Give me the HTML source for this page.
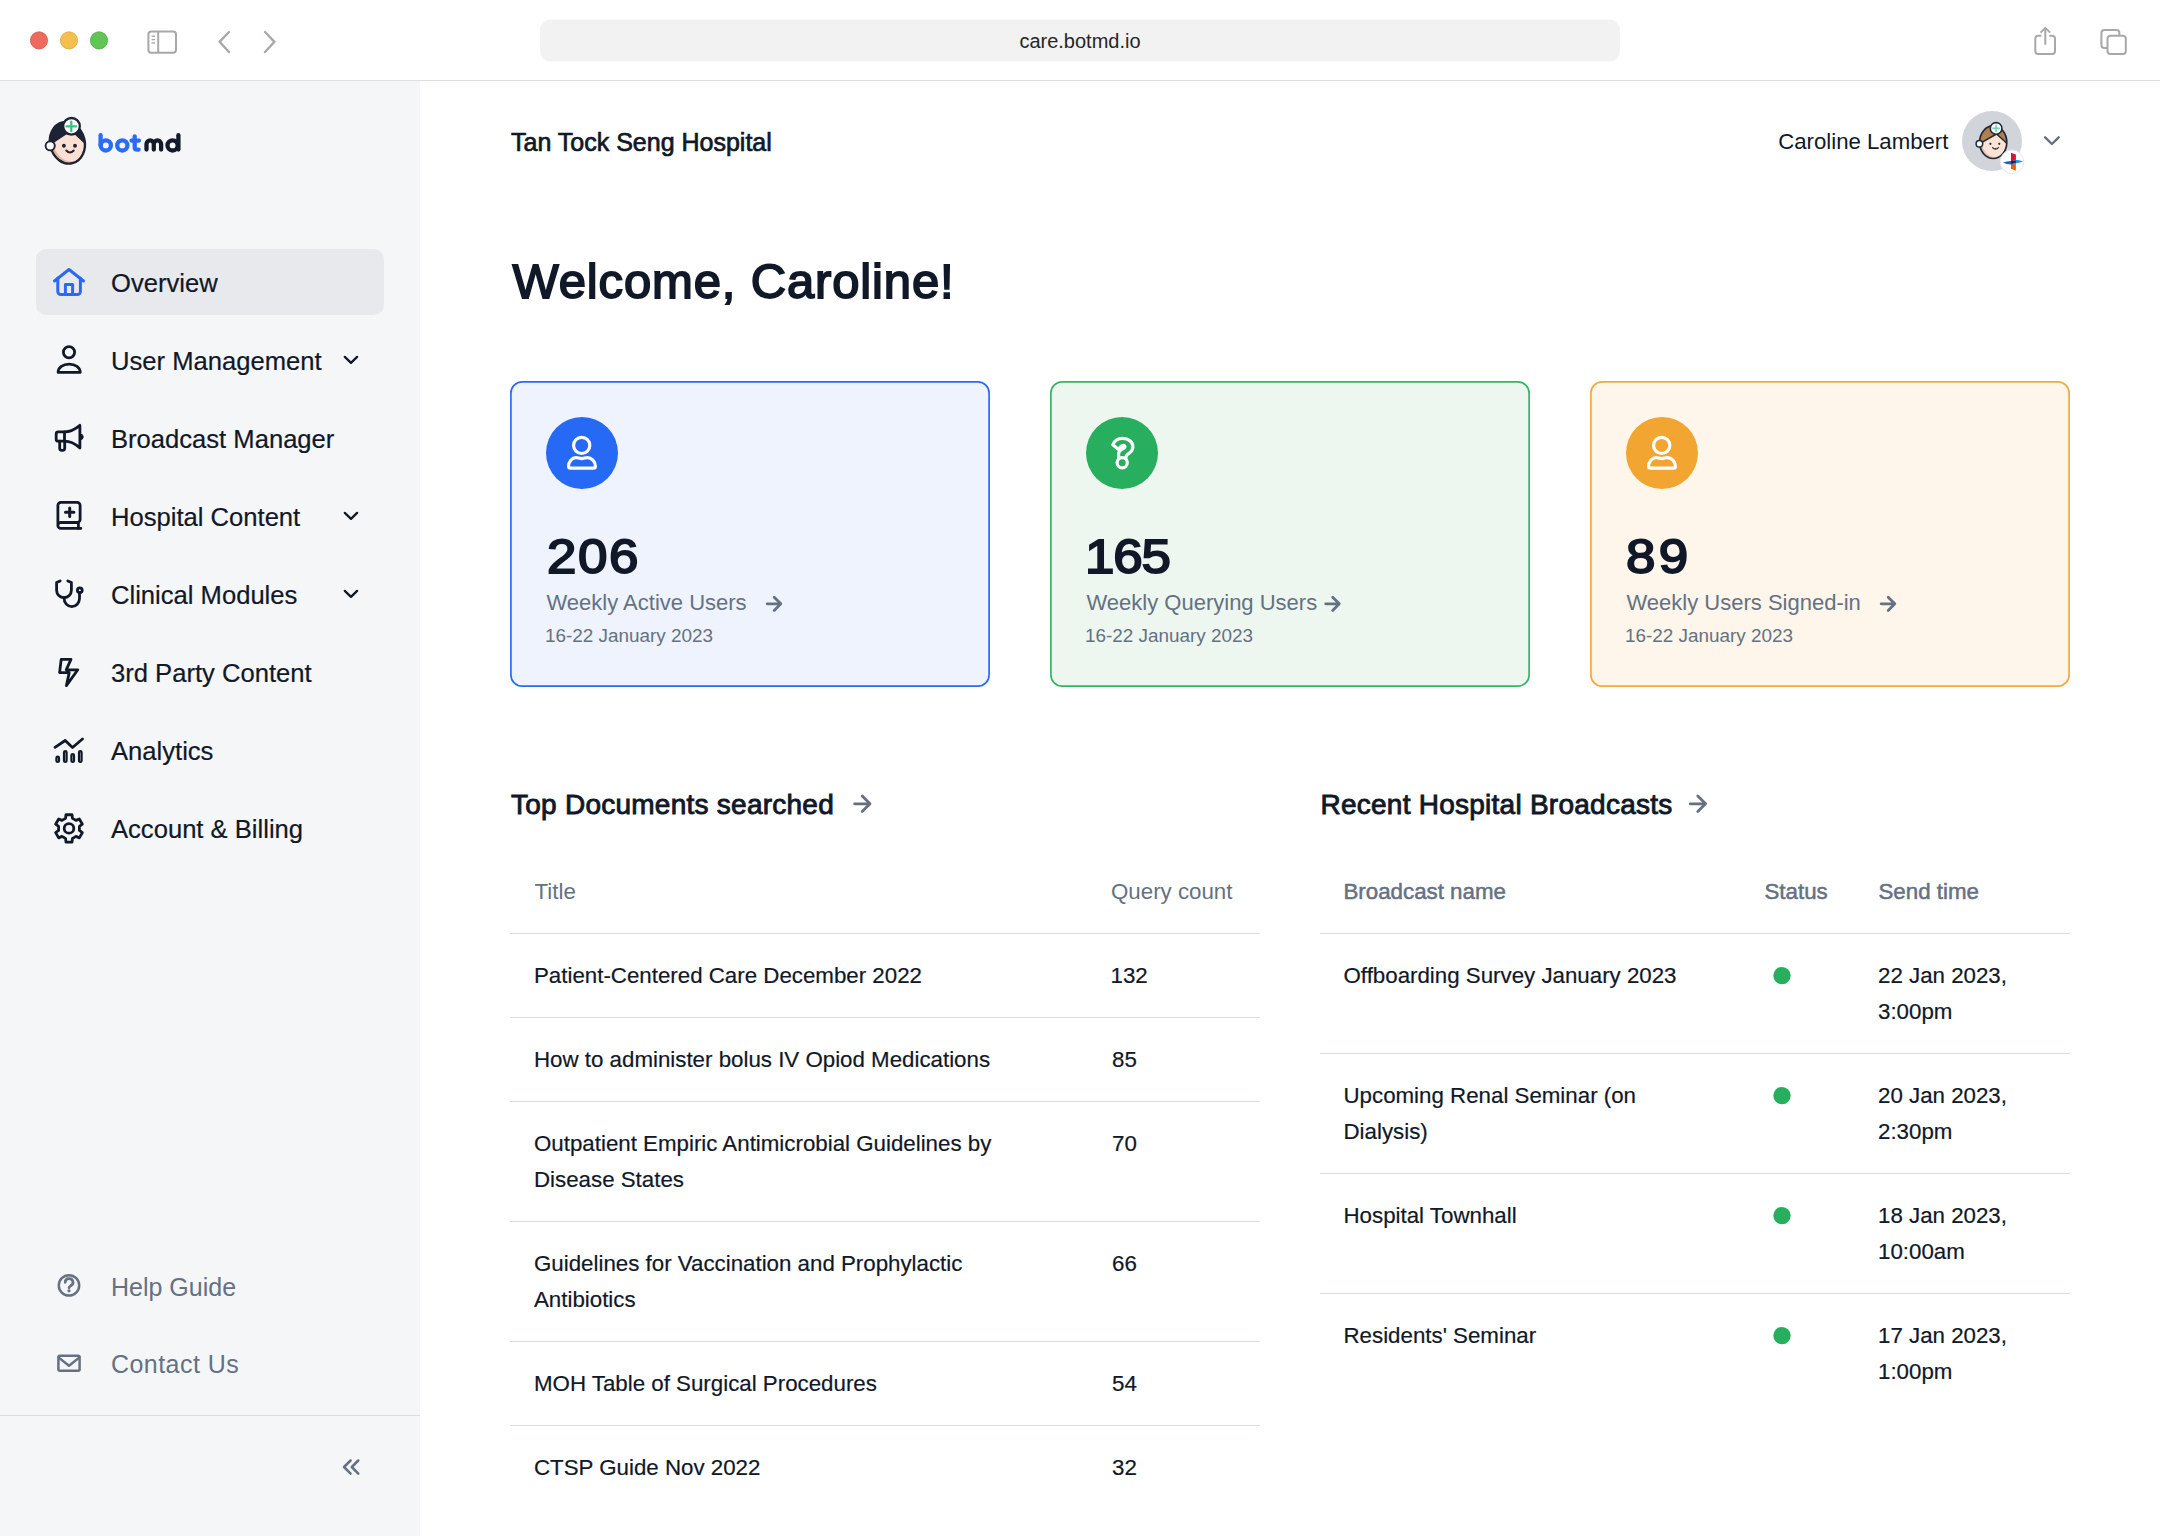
<!DOCTYPE html>
<html>
<head>
<meta charset="utf-8">
<title>botmd care</title>
<style>
html,body{margin:0;padding:0;}
body{width:2160px;height:1536px;overflow:hidden;position:relative;background:#fff;font-family:"Liberation Sans",sans-serif;color:#111827;}
.a{position:absolute;white-space:nowrap;}
svg{position:absolute;overflow:visible;}
.nav{left:111px;font-size:25.6px;line-height:40px;color:#111827;-webkit-text-stroke:0.2px #111827;}
.foot{left:111px;font-size:25px;line-height:40px;color:#657182;}
.num{font-size:49px;letter-spacing:0px;transform:scaleX(1.08);transform-origin:0 0;-webkit-text-stroke:1.9px #111827;line-height:60px;color:#111827;}
.lbl{font-size:22px;line-height:30px;color:#657182;}
.dt{font-size:18.9px;line-height:26px;color:#657182;}
.sec{font-size:28px;letter-spacing:0.25px;-webkit-text-stroke:0.9px #111827;line-height:36px;color:#111827;}
.th{font-size:22.3px;line-height:36px;color:#657182;}
.td{font-size:22.3px;line-height:36px;color:#111827;-webkit-text-stroke:0.2px #111827;}
.hl{position:absolute;height:1px;background:#d9dee4;}
</style>
</head>
<body>
<div class="a" style="left:0;top:0;width:2160px;height:80px;background:#fff;border-bottom:1px solid #dedede;"></div>
<svg width="2160" height="80" style="left:0;top:0">
  <circle cx="39" cy="40.4" r="8.6" fill="#ec6a5e" stroke="#d8574b" stroke-width="0.8"/>
  <circle cx="69" cy="40.4" r="8.6" fill="#f5bf4f" stroke="#dea73a" stroke-width="0.8"/>
  <circle cx="99" cy="40.4" r="8.6" fill="#61c554" stroke="#4eae42" stroke-width="0.8"/>
  <rect x="148.4" y="31.4" width="27.6" height="21.4" rx="3" fill="none" stroke="#a8a8a8" stroke-width="2"/>
  <line x1="158.2" y1="31.4" x2="158.2" y2="52.8" stroke="#a8a8a8" stroke-width="2"/>
  <line x1="151.5" y1="36.2" x2="155" y2="36.2" stroke="#a8a8a8" stroke-width="1.4"/>
  <line x1="151.5" y1="39.6" x2="155" y2="39.6" stroke="#a8a8a8" stroke-width="1.4"/>
  <line x1="151.5" y1="43" x2="155" y2="43" stroke="#a8a8a8" stroke-width="1.4"/>
  <polyline points="229,32 219.5,41.8 229,52" fill="none" stroke="#a8a8a8" stroke-width="2.4" stroke-linecap="round" stroke-linejoin="round"/>
  <polyline points="265,32 274.5,41.8 265,52" fill="none" stroke="#a8a8a8" stroke-width="2.4" stroke-linecap="round" stroke-linejoin="round"/>
  <rect x="540" y="19.5" width="1080" height="42" rx="10" fill="#f2f2f2"/>
  <path d="M2041.4 35.8 H2038.3 a3 3 0 0 0 -3 3 V50.9 a3 3 0 0 0 3 3 H2052 a3 3 0 0 0 3 -3 V38.8 a3 3 0 0 0 -3 -3 H2049.2" fill="none" stroke="#a8a8a8" stroke-width="2"/>
  <line x1="2045.3" y1="28.5" x2="2045.3" y2="44.7" stroke="#a8a8a8" stroke-width="2"/>
  <polyline points="2040.5,32.6 2045.3,27.8 2050.1,32.6" fill="none" stroke="#a8a8a8" stroke-width="2"/>
  <path d="M2107.5 48 H2104.4 a3 3 0 0 1 -3 -3 V33 a3 3 0 0 1 3 -3 H2116.4 a3 3 0 0 1 3 3 V35.8" fill="none" stroke="#a8a8a8" stroke-width="2"/>
  <rect x="2107.5" y="35.8" width="18.3" height="18.1" rx="3" fill="none" stroke="#a8a8a8" stroke-width="2"/>
</svg>
<div class="a" style="left:540px;width:1080px;top:19.5px;text-align:center;font-size:20px;line-height:42px;color:#262626;">care.botmd.io</div>
<div class="a" style="left:0;top:81px;width:420px;height:1455px;background:#f5f6f8;"></div>
<div class="a" style="left:36px;top:249px;width:348px;height:66px;border-radius:10px;background:#e8e9ed;"></div>
<svg width="420" height="1536" style="left:0;top:0">
  <g>
    <clipPath id="headclip"><ellipse cx="67.4" cy="142.8" rx="17.3" ry="21" transform="rotate(-14 67.4 142.8)"/></clipPath>
    <ellipse cx="67.4" cy="142.8" rx="17.3" ry="21" transform="rotate(-14 67.4 142.8)" fill="#e2b49b"/>
    <g clip-path="url(#headclip)">
      <ellipse cx="70.2" cy="140.8" rx="17.3" ry="21" transform="rotate(-14 70.2 140.8)" fill="#fde0d3"/>
      <path d="M40 110 H95 V147 L83.8 143 L75 134.8 L66.3 134.6 L54.6 142.3 L40 150 Z" fill="#1e2235"/>
    </g>
    <ellipse cx="67.4" cy="142.8" rx="17.3" ry="21" transform="rotate(-14 67.4 142.8)" fill="none" stroke="#1e2235" stroke-width="2.4"/>
    <circle cx="71.5" cy="126.3" r="8.3" fill="#fff" stroke="#1e2235" stroke-width="2.3"/>
    <path d="M71.3 121.5 V131.2 M66.5 126.3 H76.2" stroke="#33c47f" stroke-width="2.2" stroke-linecap="round"/>
    <circle cx="50.2" cy="145.8" r="4.6" fill="#fff" stroke="#1e2235" stroke-width="1.9"/>
    <circle cx="63.9" cy="145.8" r="1.95" fill="#1e2235"/>
    <circle cx="75" cy="145.8" r="1.95" fill="#1e2235"/>
    <path d="M66.3 150.5 Q70 154.4 73.7 150.5" fill="none" stroke="#1e2235" stroke-width="2" stroke-linecap="round"/>
  </g>
  <g fill="none" stroke-width="4.3" stroke-linecap="round" stroke-linejoin="round">
    <g stroke="#2b6cf6">
      <path d="M100.6 135.2 V145.4"/><circle cx="105.8" cy="145.4" r="5.1"/>
      <circle cx="122.3" cy="145.4" r="5.1"/>
      <path d="M134.7 136.3 V147.2 Q134.7 149.6 137.2 149.6 H138.6 M131.5 140.6 H139"/>
    </g>
    <g stroke="#151a2b">
      <path d="M146.5 149.5 V144.1 a3.65 3.65 0 0 1 7.3 0 V149.5 M153.8 144.1 a3.65 3.65 0 0 1 7.3 0 V149.5"/>
      <circle cx="172.6" cy="145.4" r="5.1"/><path d="M178.4 135.2 V149.5"/>
    </g>
  </g>
  <g fill="none" stroke="#2a6af3" stroke-width="3" stroke-linecap="round" stroke-linejoin="round">
    <polyline points="54.5,281 69,269.5 83.5,281"/>
    <path d="M57.8 278 V291.5 a3 3 0 0 0 3 3 H77.4 a3 3 0 0 0 3 -3 V278"/>
    <path d="M65.4 294.5 V284.4 H72.6 V294.5"/>
  </g>
  <g fill="none" stroke="#111827" stroke-width="2.8" stroke-linecap="round" stroke-linejoin="round">
    <circle cx="69" cy="352.3" r="5.6"/>
    <path d="M58.1 372.4 C58.1 367.5 63 364.1 69.15 364.1 C75.3 364.1 80.2 367.5 80.2 372.4 Z"/>
    <path d="M64.5 431.8 H58.2 a2 2 0 0 0 -2 2 V439.2 a2 2 0 0 0 2 2 H64.5 Z"/>
    <path d="M59.7 441.2 V448.3 a2 2 0 0 0 2 2 H62.7 a2 2 0 0 0 2 -2 V441.2"/>
    <path d="M64.5 431.8 C70 431.8 74.5 429.8 79.9 425.3 V448 C74.5 443.2 70 441.2 64.5 441.2"/>
    <path d="M80.4 434.1 a2.8 2.8 0 0 1 0 5.6 Z" fill="#111827" stroke-width="1"/>
    <path d="M57.9 525.4 V505.3 a3 3 0 0 1 3 -3 H77.1 a3 3 0 0 1 3 3 V519.5 a3 3 0 0 1 -3 3 H61 a3 3 0 0 0 -3.1 2.9 a3 3 0 0 0 3 3 H80.8"/>
    <path d="M78.4 522.5 V528.4"/>
    <path d="M69.7 508.1 V516.5 M65.5 512.3 H73.9" stroke-width="3"/>
    <path d="M60.2 580.9 L56.6 582.6 V590.2 a7.4 7.4 0 0 0 14.8 0 V582.6 L67.8 580.9"/>
    <path d="M64 597.6 C64 603 67.5 606.6 71.8 606.6 C76 606.6 79.5 603 79.5 598.5 V592.7"/>
    <circle cx="79.8" cy="590.2" r="2.4"/>
    <path d="M61.2 659.4 H71 L66.2 669.8 H77.8 L66.4 685.6 L69.2 672.6 H59.6 Z"/>
    <polyline points="55,747.3 65.2,740.5 72.5,747.5 82.5,739"/>
    <rect x="56.4" y="756.6" width="2.6" height="5.4" rx="1.3" stroke-width="2.2"/>
    <rect x="64" y="751.1" width="2.6" height="10.9" rx="1.3" stroke-width="2.2"/>
    <rect x="71.4" y="754.1" width="2.6" height="7.9" rx="1.3" stroke-width="2.2"/>
    <rect x="79" y="751.1" width="2.6" height="10.9" rx="1.3" stroke-width="2.2"/>
    <path d="M65.55 818.38 L65.97 814.73 L72.03 814.73 L72.45 818.38 L75.95 820.40 L79.32 818.94 L82.35 824.19 L79.41 826.38 L79.41 830.42 L82.35 832.61 L79.32 837.86 L75.95 836.40 L72.45 838.42 L72.03 842.07 L65.97 842.07 L65.55 838.42 L62.05 836.40 L58.68 837.86 L55.65 832.61 L58.59 830.42 L58.59 826.38 L55.65 824.19 L58.68 818.94 L62.05 820.40 Z"/>
    <circle cx="69" cy="828.4" r="4.8"/>
  </g>
  <g fill="none" stroke="#111827" stroke-width="2.3" stroke-linecap="round" stroke-linejoin="round"><polyline points="344.8,356.9 351,362.9 357.1,356.9"/><polyline points="344.8,512.9 351,518.9 357.1,512.9"/><polyline points="344.8,590.9 351,596.9 357.1,590.9"/></g>
  <g fill="none" stroke="#657182" stroke-width="2.5" stroke-linecap="round" stroke-linejoin="round">
    <circle cx="69" cy="1285.4" r="10.2"/>
    <path d="M65.2 1282.4 a3.9 3.7 0 1 1 5.9 3.1 c-1.1 0.7 -2.1 1.1 -2.1 2.3" stroke-width="2.7"/>
    <rect x="58.4" y="1355.8" width="21.2" height="15" rx="1.5"/>
    <polyline points="58.8,1357.6 69,1365.8 79.2,1357.6"/>
    <polyline points="350.6,1460.5 344,1467 350.6,1473.6" stroke-width="2.5"/>
    <polyline points="358.3,1460.5 351.8,1467 358.3,1473.6" stroke-width="2.5"/>
  </g>
  <circle cx="69" cy="1290.8" r="1.6" fill="#657182"/>
</svg>
<div class="a nav" style="top:263px">Overview</div>
<div class="a nav" style="top:341px">User Management</div>
<div class="a nav" style="top:419px">Broadcast Manager</div>
<div class="a nav" style="top:497px">Hospital Content</div>
<div class="a nav" style="top:575px">Clinical Modules</div>
<div class="a nav" style="top:653px">3rd Party Content</div>
<div class="a nav" style="top:731px">Analytics</div>
<div class="a nav" style="top:809px">Account &amp; Billing</div>
<div class="a foot" style="top:1266.6px">Help Guide</div>
<div class="a foot" style="top:1344px;letter-spacing:0.45px">Contact Us</div>
<div class="a" style="left:0;top:1415px;width:420px;height:1px;background:#d9dce1;"></div>
<div class="a" style="left:511px;top:123.8px;font-size:25px;line-height:36px;color:#111827;-webkit-text-stroke:0.7px #111827;">Tan Tock Seng Hospital</div>
<div class="a" style="right:211.6px;top:126.9px;font-size:22.2px;line-height:30px;color:#111827;">Caroline Lambert</div>
<svg width="2160" height="200" style="left:0;top:0">
  <circle cx="1992" cy="141" r="30" fill="#d1d5db"/>
  <clipPath id="avclip"><ellipse cx="1993.2" cy="142.2" rx="13.6" ry="16.3"/></clipPath>
  <ellipse cx="1993.2" cy="142.2" rx="13.6" ry="16.3" fill="#e9bea6"/>
  <g clip-path="url(#avclip)">
    <ellipse cx="1995.2" cy="140.6" rx="13.6" ry="16.3" fill="#fde2d6"/>
    <path d="M1975 120 H2012 V150 L2006 142.5 L1996.5 134 L1981 142.8 L1975 146 Z" fill="#b07f4f" stroke="#1f2937" stroke-width="1.5" stroke-linejoin="round"/>
  </g>
  <ellipse cx="1993.2" cy="142.2" rx="13.6" ry="16.3" fill="none" stroke="#1f2937" stroke-width="1.7"/>
  <circle cx="1996.1" cy="128.4" r="5.8" fill="#fff" stroke="#1f2937" stroke-width="1.6"/>
  <path d="M1996.1 124.6 V132.2 M1992.3 128.4 H1999.9" stroke="#7fd1bf" stroke-width="1.6"/>
  <circle cx="1979.4" cy="143.8" r="3.3" fill="#fff" stroke="#1f2937" stroke-width="1.5"/>
  <circle cx="1990.4" cy="143.8" r="1.1" fill="#1f2937"/>
  <circle cx="1999.3" cy="143.8" r="1.1" fill="#1f2937"/>
  <path d="M1992.6 147.6 Q1995.5 150.4 1998.4 147.6" fill="none" stroke="#1f2937" stroke-width="1.3" stroke-linecap="round"/>
  <circle cx="2012" cy="161.8" r="11.8" fill="#fff" stroke="#e5e7eb" stroke-width="1"/>
  <path d="M2011 152.7 L2015.9 154.6 V160.4 L2011 161.2 Z" fill="#e0112b"/>
  <path d="M2011 163 L2015.9 162.8 V170.8 L2011 168.8 Z" fill="#e8620f"/>
  <path d="M2003 162.6 Q2007 160.5 2013.5 161 L2013 164.4 Q2007 164.8 2003 162.6 Z" fill="#1e5fc8"/>
  <path d="M2013 160 Q2018 159.2 2023.2 161.6 Q2018 163.8 2013 163.6 Z" fill="#2a9be0"/>
  <path d="M2011 161 L2015.9 160.4 L2015.9 162.8 L2011 163.4 Z" fill="#0d2a63"/>
  <polyline points="2045.1,137.3 2051.9,144 2058.7,137.3" fill="none" stroke="#657182" stroke-width="2.4" stroke-linecap="round" stroke-linejoin="round"/>
</svg>
<div class="a" style="left:512.5px;top:250.7px;font-size:49px;letter-spacing:0.85px;-webkit-text-stroke:1.8px #111827;line-height:60px;color:#111827;">Welcome, Caroline!</div>
<svg width="2160" height="800" style="left:0;top:0">
<rect x="510.9" y="381.9" width="478.2" height="304.2" rx="11.2" fill="#eef3fd" stroke="#2a6af4" stroke-width="1.7"/>
<circle cx="582" cy="453" r="36" fill="#2669f5"/>
<g fill="none" stroke="#657182" stroke-width="2.8" stroke-linecap="round" stroke-linejoin="round"><path d="M767.2 603.8 H780.8 M774.1999999999999 597.1999999999999 L780.8 603.8 L774.1999999999999 610.4"/></g>
<rect x="1050.9" y="381.9" width="478.2" height="304.2" rx="11.2" fill="#edf7f0" stroke="#36b566" stroke-width="1.7"/>
<circle cx="1122" cy="453" r="36" fill="#28ae5f"/>
<g fill="none" stroke="#657182" stroke-width="2.8" stroke-linecap="round" stroke-linejoin="round"><path d="M1325.7 603.8 H1339.3 M1332.7 597.1999999999999 L1339.3 603.8 L1332.7 610.4"/></g>
<rect x="1590.9" y="381.9" width="478.2" height="304.2" rx="11.2" fill="#fef5eb" stroke="#f1aa3e" stroke-width="1.7"/>
<circle cx="1662" cy="453" r="36" fill="#f2a530"/>
<g fill="none" stroke="#657182" stroke-width="2.8" stroke-linecap="round" stroke-linejoin="round"><path d="M1881.2 603.8 H1894.8 M1888.2 597.1999999999999 L1894.8 603.8 L1888.2 610.4"/></g>
<g fill="none" stroke="#fff" stroke-width="3.2" stroke-linecap="round" stroke-linejoin="round">
<circle cx="581.7" cy="445.4" r="8.1"/>
  <path d="M568.6 466.2 C568.6 461.6 572.0 457.6 576.0 457.6 C578.0 457.6 579.5 458.6 581.7 458.6 C583.9000000000001 458.6 585.4000000000001 457.6 587.4000000000001 457.6 C591.4000000000001 457.6 595.4000000000001 461.6 595.4000000000001 466.2 Q595.4000000000001 468.1 593.5 468.1 H570.5 Q568.6 468.1 568.6 466.2 Z"/>
<circle cx="1661.7" cy="445.4" r="8.1"/>
  <path d="M1648.6000000000001 466.2 C1648.6000000000001 461.6 1652.0 457.6 1656.0 457.6 C1658.0 457.6 1659.5 458.6 1661.7 458.6 C1663.9 458.6 1665.4 457.6 1667.4 457.6 C1671.4 457.6 1675.4 461.6 1675.4 466.2 Q1675.4 468.1 1673.5 468.1 H1650.5 Q1648.6000000000001 468.1 1648.6000000000001 466.2 Z"/>
<circle cx="1122.2" cy="462.7" r="5.1"/>
<path d="M1118.6 458 V454.2 C1118.6 451.5 1120.5 449.8 1122.8 448.7 C1124.6 447.8 1125.3 447.2 1124.9 446.3 C1124.3 445 1121.6 445.2 1120 447.2 L1118.2 449.3 L1112.8 444.8 C1114.5 440.4 1118.4 438.3 1122.6 438.3 C1128.5 438.3 1132.9 442.1 1132.9 446.8 C1132.9 450.5 1130.2 452.8 1127.6 454.3 C1126.3 455.1 1125.9 456.3 1125.9 458"/>
</g></svg>
<div class="a num" style="left:547px;top:526px;letter-spacing:1.4px">206</div>
<div class="a lbl" style="left:546.5px;top:587.7px">Weekly Active Users</div>
<div class="a dt" style="left:545px;top:622.6px">16-22 January 2023</div>
<div class="a num" style="left:1084.5px;top:526px;letter-spacing:-1.1px">165</div>
<div class="a lbl" style="left:1086.5px;top:587.7px">Weekly Querying Users</div>
<div class="a dt" style="left:1085px;top:622.6px">16-22 January 2023</div>
<div class="a num" style="left:1625.8px;top:526px;letter-spacing:3.1px">89</div>
<div class="a lbl" style="left:1626.5px;top:587.7px">Weekly Users Signed-in</div>
<div class="a dt" style="left:1625px;top:622.6px">16-22 January 2023</div>
<div class="a sec" style="left:511px;top:787.2px">Top Documents searched</div>
<div class="a sec" style="left:1320.5px;top:787.2px">Recent Hospital Broadcasts</div>
<svg width="2160" height="1536" style="left:0;top:0"><g fill="none" stroke="#657182" stroke-width="2.8" stroke-linecap="round" stroke-linejoin="round">
<path d="M854.6 803.8 H870 M862.2 796.0 L870 803.8 L862.2 811.5999999999999"/><path d="M1690.2 803.8 H1705.6 M1697.8 796.0 L1705.6 803.8 L1697.8 811.5999999999999"/>
</g>
<circle cx="1782" cy="975.6" r="8.7" fill="#28ae5f"/>
<circle cx="1782" cy="1095.6" r="8.7" fill="#28ae5f"/>
<circle cx="1782" cy="1215.6" r="8.7" fill="#28ae5f"/>
<circle cx="1782" cy="1335.6" r="8.7" fill="#28ae5f"/>
</svg>
<div class="a th" style="left:534.5px;top:873.5px">Title</div>
<div class="a th" style="left:1111px;top:873.5px">Query count</div>
<div class="hl" style="left:510px;top:933px;width:750px"></div>
<div class="a td" style="left:534px;top:957.5px">Patient-Centered Care December 2022</div>
<div class="a td" style="left:1110.5px;top:957.5px">132</div>
<div class="hl" style="left:510px;top:1017px;width:750px"></div>
<div class="a td" style="left:534px;top:1041.5px">How to administer bolus IV Opiod Medications</div>
<div class="a td" style="left:1112px;top:1041.5px">85</div>
<div class="hl" style="left:510px;top:1101px;width:750px"></div>
<div class="a td" style="left:534px;top:1125.5px">Outpatient Empiric Antimicrobial Guidelines by<br>Disease States</div>
<div class="a td" style="left:1112px;top:1125.5px">70</div>
<div class="hl" style="left:510px;top:1221px;width:750px"></div>
<div class="a td" style="left:534px;top:1245.5px">Guidelines for Vaccination and Prophylactic<br>Antibiotics</div>
<div class="a td" style="left:1112px;top:1245.5px">66</div>
<div class="hl" style="left:510px;top:1341px;width:750px"></div>
<div class="a td" style="left:534px;top:1365.5px">MOH Table of Surgical Procedures</div>
<div class="a td" style="left:1112px;top:1365.5px">54</div>
<div class="hl" style="left:510px;top:1425px;width:750px"></div>
<div class="a td" style="left:534px;top:1449.5px">CTSP Guide Nov 2022</div>
<div class="a td" style="left:1112px;top:1449.5px">32</div>
<div class="a th" style="left:1343.5px;top:873.5px;-webkit-text-stroke:0.5px #657182;">Broadcast name</div>
<div class="a th" style="left:1764.5px;top:873.5px;-webkit-text-stroke:0.5px #657182;">Status</div>
<div class="a th" style="left:1878.5px;top:873.5px;-webkit-text-stroke:0.5px #657182;">Send time</div>
<div class="hl" style="left:1320px;top:933px;width:750px"></div>
<div class="a td" style="left:1343.5px;top:957.5px">Offboarding Survey January 2023</div>
<div class="a td" style="left:1878px;top:957.5px">22 Jan 2023,<br>3:00pm</div>
<div class="hl" style="left:1320px;top:1053px;width:750px"></div>
<div class="a td" style="left:1343.5px;top:1077.5px">Upcoming Renal Seminar (on<br>Dialysis)</div>
<div class="a td" style="left:1878px;top:1077.5px">20 Jan 2023,<br>2:30pm</div>
<div class="hl" style="left:1320px;top:1173px;width:750px"></div>
<div class="a td" style="left:1343.5px;top:1197.5px">Hospital Townhall</div>
<div class="a td" style="left:1878px;top:1197.5px">18 Jan 2023,<br>10:00am</div>
<div class="hl" style="left:1320px;top:1293px;width:750px"></div>
<div class="a td" style="left:1343.5px;top:1317.5px">Residents' Seminar</div>
<div class="a td" style="left:1878px;top:1317.5px">17 Jan 2023,<br>1:00pm</div>

</body>
</html>
